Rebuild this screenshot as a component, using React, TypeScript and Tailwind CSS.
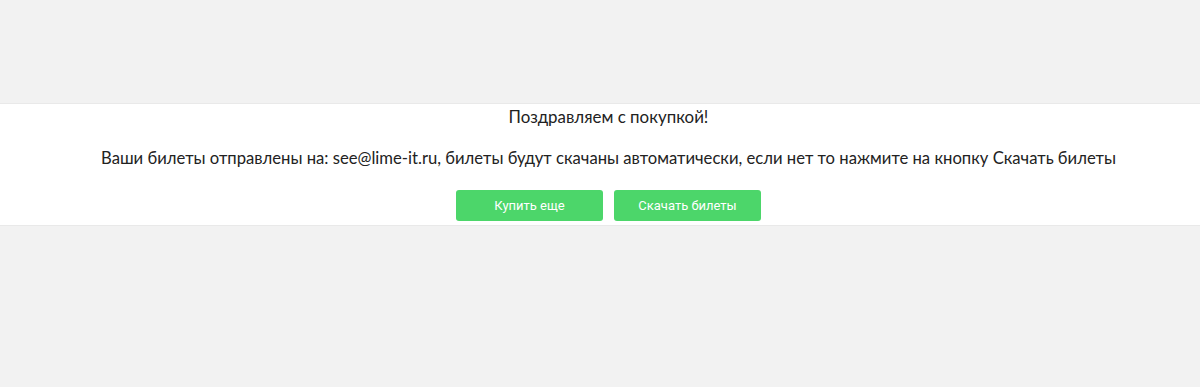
export default function App() {
  return (
    <div className="min-h-[387px] bg-[#f2f2f2] pt-[103px]" style={{ fontFamily: "Lato, 'Open Sans', sans-serif" }}>
      <div className="bg-white border-y border-[#e9e9e9] flex flex-col items-center text-[#222] pt-[1px] pb-[4px] pl-[17px]">
        <p className="text-[16.9px] leading-[24px]">Поздравляем с покупкой!</p>
        <p className="text-[16.65px] leading-[24px] mt-[17px]">
          Ваши билеты отправлены на: see@lime-it.ru, билеты будут скачаны автоматически, если нет то нажмите на кнопку Скачать билеты
        </p>
        <div className="flex gap-[11px] mt-[20px]">
          <button className="w-[147px] h-[31px] rounded-[3px] bg-[#4cd66a] text-white text-[13px]" style={{ fontFamily: "Roboto, sans-serif" }}>Купить еще</button>
          <button className="w-[147px] h-[31px] rounded-[3px] bg-[#4cd66a] text-white text-[13px]" style={{ fontFamily: "Roboto, sans-serif" }}>Скачать билеты</button>
        </div>
      </div>
    </div>
  );
}
